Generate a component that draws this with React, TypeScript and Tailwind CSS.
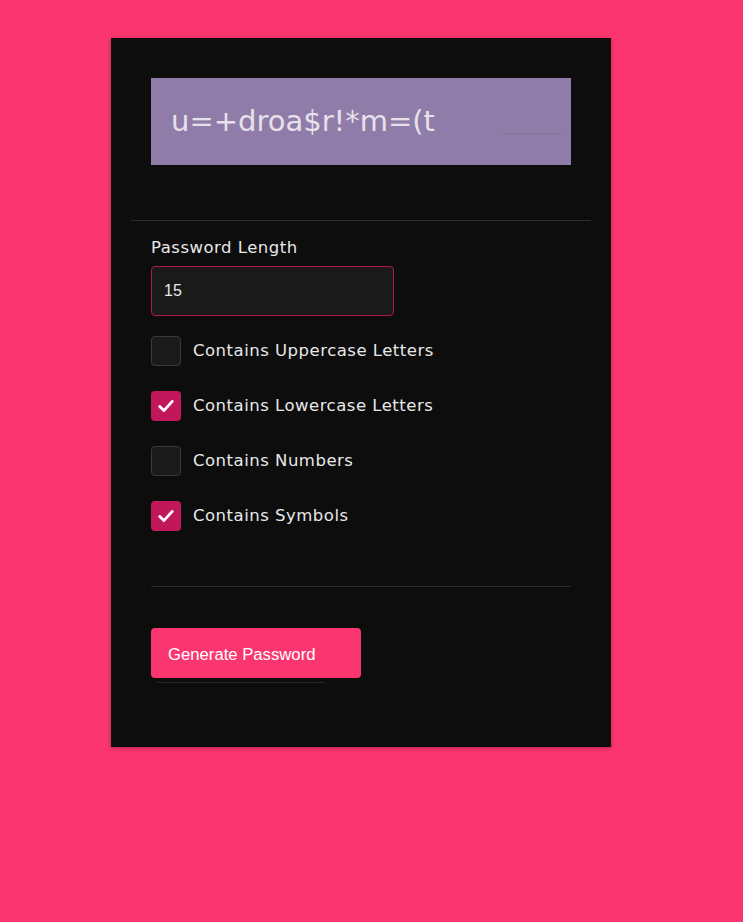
import { useState } from "react";

const font = { fontFamily: '"DejaVu Sans", "Noto Sans", sans-serif' };
const arial = { fontFamily: '"Liberation Sans", Arial, sans-serif' };

function Option({ label, checked, onToggle }: { label: string; checked: boolean; onToggle: () => void }) {
  return (
    <label className="flex items-center gap-3 h-[30px] cursor-pointer" onClick={onToggle}>
      <span
        className={
          checked
            ? "w-[30px] h-[30px] rounded-[4px] bg-[#c2185b] flex items-center justify-center"
            : "w-[30px] h-[30px] rounded-[4px] bg-[#1a1a1a] border border-[#3a3a3a]"
        }
      >
        {checked && (
          <svg width="20" height="20" viewBox="0 0 24 24" fill="none" stroke="white" strokeWidth="3.4" strokeLinecap="round" strokeLinejoin="round">
            <path d="M4.5 12.5l5 5L19.5 6.5" />
          </svg>
        )}
      </span>
      <span className="text-[16.5px] tracking-[0.5px] text-[#e8e8e8]" style={font}>
        {label}
      </span>
    </label>
  );
}

export default function App() {
  const [opts, setOpts] = useState({ upper: false, lower: true, numbers: false, symbols: true });

  const options = [
    { key: "upper", label: "Contains Uppercase Letters" },
    { key: "lower", label: "Contains Lowercase Letters" },
    { key: "numbers", label: "Contains Numbers" },
    { key: "symbols", label: "Contains Symbols" },
  ] as const;

  return (
    <div className="min-h-[922px] bg-[#fb356f] pt-[38px] pl-[111px]">
      <div className="w-[500px] bg-[#0d0d0d] shadow-[0_1px_4px_rgba(0,0,0,0.3)] px-5 pt-10 pb-[64px]">
        <div className="mx-5 h-[87px] bg-[#907ca8] flex items-center px-5 relative">
          <span className="text-[29px] text-[#e6e1ea]" style={font}>
            u=+droa$r!*m=(t
          </span>
          <span className="absolute left-[350px] top-[55px] w-[62px] h-px bg-[#847399]" />
        </div>

        <div className="mt-[55px] border-t border-[#2c2c2c]" />

        <div className="px-5 pt-[15px]">
          <div className="text-[16.5px] tracking-[0.5px] leading-[24px] text-[#e8e8e8]" style={font}>
            Password Length
          </div>
          <input
            type="text"
            defaultValue="15"
            className="mt-[6px] w-[243px] h-[50px] bg-[#1a1a1a] border border-[#b3174f] rounded-[4px] px-3 text-[16px] text-[#e8e8e8] outline-none"
            style={arial}
          />

          <div className="mt-5 flex flex-col gap-[25px]">
            {options.map((o) => (
              <Option
                key={o.key}
                label={o.label}
                checked={opts[o.key]}
                onToggle={() => setOpts({ ...opts, [o.key]: !opts[o.key] })}
              />
            ))}
          </div>

          <div className="mt-[55px] border-t border-[#2c2c2c]" />

          <button
            className="mt-[41px] w-[210px] h-[50px] bg-[#fb356f] rounded-[4px] text-left pl-[17px] pt-[3px] text-[16.7px] text-white"
            style={arial}
          >
            Generate Password
          </button>
          <div className="mt-[4px] ml-[6px] w-[168px] h-px bg-[#262626]" />
        </div>
      </div>
    </div>
  );
}
